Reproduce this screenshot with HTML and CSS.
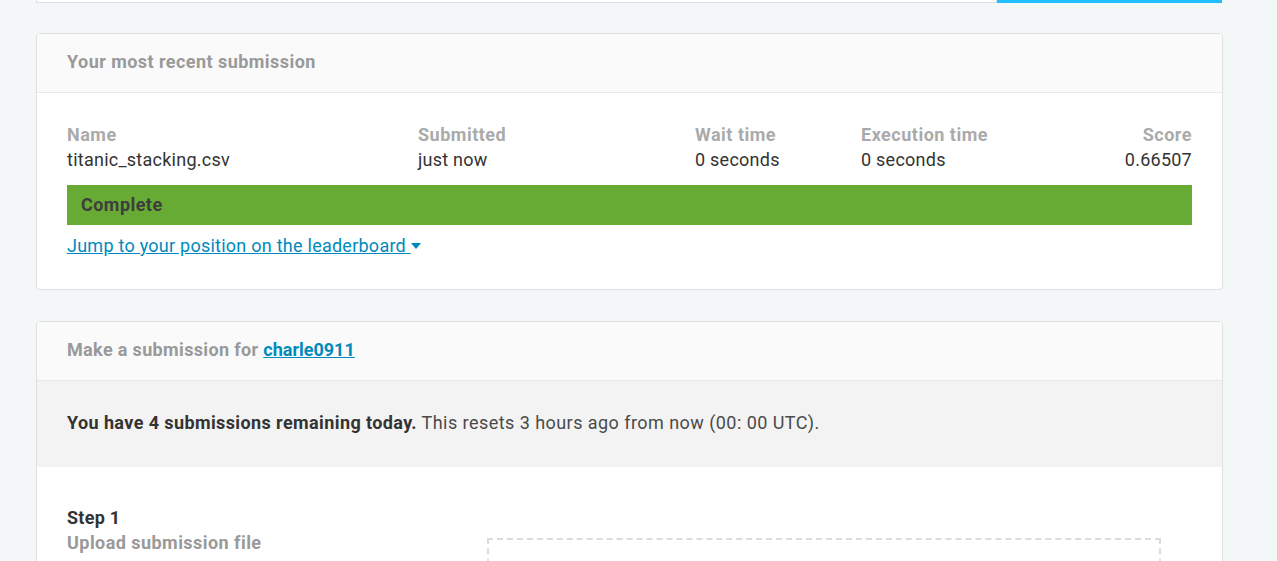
FILE: index.html
```html
<!DOCTYPE html>
<html>
<head>
<meta charset="utf-8">
<link rel="stylesheet" href="styles.css">
</head>
<body>
<div class="page">
  <div class="topbar">
    <div class="search"></div>
    <div class="btn"></div>
  </div>

  <section class="card">
    <header class="card-head">Your most recent submission</header>
    <div class="card-body">
      <div class="grid">
        <div class="col"><div class="lbl">Name</div><div class="val">titanic_stacking.csv</div></div>
        <div class="col"><div class="lbl">Submitted</div><div class="val">just now</div></div>
        <div class="col"><div class="lbl">Wait time</div><div class="val">0 seconds</div></div>
        <div class="col"><div class="lbl">Execution time</div><div class="val">0 seconds</div></div>
        <div class="col right"><div class="lbl">Score</div><div class="val">0.66507</div></div>
      </div>
      <div class="status">Complete</div>
      <a class="jump" href="#">Jump to your position on the leaderboard&nbsp;<svg class="caret" width="10" height="6" viewBox="0 0 10 6"><path d="M0 0h10L5 6z" fill="#008abc"/></svg></a>
    </div>
  </section>

  <section class="card card2">
    <header class="card-head head2">Make a submission for <a class="team" href="#">charle0911</a></header>
    <div class="notice"><b>You have 4 submissions remaining today.</b> This resets 3 hours ago from now (00: 00 UTC).</div>
    <div class="step">
      <div class="step-text">
        <div class="step-title">Step 1</div>
        <div class="step-sub">Upload submission file</div>
      </div>
      <div class="drop"></div>
    </div>
  </section>
</div>
</body>
</html>
```
FILE: styles.css
```css
* { box-sizing: border-box; }
html, body { margin: 0; padding: 0; }
body {
  background: #f4f7f8;
  font-family: Roboto, "Liberation Sans", sans-serif;
  color: #333;
  font-size: 18px;
  letter-spacing: 0.25px;
  overflow: hidden;
}
.page {
  width: 1187px;
  margin-left: 36px;
}
.topbar {
  display: flex;
  height: 3px;
}
.search {
  width: 961px;
  background: #fff;
  border: 1px solid #dedfe0;
  border-top: 0;
}
.btn {
  width: 225px;
  background: #20beff;
}
.card {
  margin-top: 30px;
  background: #fff;
  border: 1px solid #dedfe0;
  border-radius: 4px;
  overflow: hidden;
}
.card-head {
  background: #fafafa;
  border-bottom: 1px solid #e8e8e8;
  height: 59px;
  line-height: 55px;
  padding: 0 30px;
  font-weight: 700;
  letter-spacing: 0.45px;
  color: #999;
}
.head2 { letter-spacing: 0.35px; }
.card-body {
  padding: 29px 30px 31px;
}
.grid {
  display: grid;
  grid-template-columns: 351px 277px 166px 1fr auto;
  line-height: 25px;
}
.lbl { color: #aaa; font-weight: 700; letter-spacing: 0.5px; }
.val { color: #333; }
.right { text-align: right; }
.status {
  margin-top: 13px;
  height: 40px;
  line-height: 40px;
  background: #67ab35;
  color: #3d3d3d;
  font-weight: 700;
  letter-spacing: 0.45px;
  padding: 0 14px;
}
.jump {
  display: inline-block;
  margin-top: 8px;
  line-height: 25px;
  color: #008abc;
  text-decoration: underline;
}
.caret { vertical-align: 3px; }
.card2 { margin-top: 31px; }
.team { color: #008abc; text-decoration: underline; font-weight: 700; letter-spacing: 0; }
.notice {
  background: #f3f3f3;
  height: 86px;
  line-height: 84px;
  padding: 0 30px;
  color: #4a4a4a;
  letter-spacing: 0.45px;
}
.notice b { font-weight: 700; color: #333; letter-spacing: 0.4px; }
.step {
  display: flex;
  padding: 38px 30px 0 30px;
  height: 140px;
}
.step-text { width: 420px; line-height: 25px; }
.step-title { color: #333; font-weight: 700; }
.step-sub { color: #999; font-weight: 700; letter-spacing: 0.45px; }
.drop {
  margin-top: 33px;
  width: 674px;
  height: 120px;
  border: 2px dashed #dcdcdc;
}
```
